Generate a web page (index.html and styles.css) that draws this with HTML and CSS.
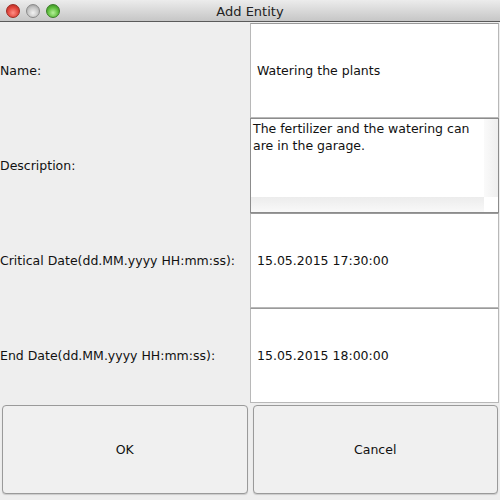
FILE: index.html
```html
<!DOCTYPE html>
<html>
<head>
<meta charset="utf-8">
<link rel="stylesheet" href="styles.css">
</head>
<body>
<div class="window">
  <div class="titlebar">
    <div class="lights">
      <span class="light red"></span>
      <span class="light gray"></span>
      <span class="light green"></span>
    </div>
    <div class="title">Add Entity</div>
  </div>
  <div class="form">
    <div class="label">Name:</div>
    <div class="field">Watering the plants</div>
    <div class="label">Description:</div>
    <div class="area">
      <div class="area-main">
        <div class="area-text">The fertilizer and the watering can are in the garage.</div>
        <div class="vscroll"></div>
      </div>
      <div class="area-bottom">
        <div class="hscroll"></div>
        <div class="corner"></div>
      </div>
    </div>
    <div class="label">Critical Date(dd.MM.yyyy HH:mm:ss):</div>
    <div class="field">15.05.2015 17:30:00</div>
    <div class="label">End Date(dd.MM.yyyy HH:mm:ss):</div>
    <div class="field">15.05.2015 18:00:00</div>
  </div>
  <div class="buttons">
    <div class="btn">OK</div>
    <div class="btn">Cancel</div>
  </div>
</div>
</body>
</html>
```
FILE: styles.css
```css
html, body {
  margin: 0;
  padding: 0;
}
body {
  width: 500px;
  height: 500px;
  background: #eeeeee;
  font-family: "DejaVu Sans", "Liberation Sans", sans-serif;
  font-size: 12.5px;
  color: #111;
  overflow: hidden;
}
.window {
  width: 500px;
  height: 500px;
  display: flex;
  flex-direction: column;
}
.titlebar {
  height: 22px;
  box-sizing: border-box;
  border-bottom: 1px solid #5a5a5a;
  background: linear-gradient(#ececec, #c6c6c6);
  position: relative;
  display: flex;
  align-items: center;
  justify-content: center;
}
.lights {
  position: absolute;
  left: 6px;
  top: 4px;
  display: flex;
  gap: 6px;
}
.light {
  width: 14px;
  height: 14px;
  border-radius: 50%;
  box-sizing: border-box;
}
.red {
  background: radial-gradient(circle at 50% 65%, #ff8f86 0%, #e0443a 55%, #a8261e 100%);
  border: 1px solid #9c2a22;
}
.gray {
  background: radial-gradient(circle at 50% 65%, #f2f2f2 0%, #c4c4c4 55%, #8e8e8e 100%);
  border: 1px solid #8a8a8a;
}
.green {
  background: radial-gradient(circle at 50% 65%, #b6f09a 0%, #5cbc3a 55%, #2f7e1d 100%);
  border: 1px solid #3a7d27;
}
.title {
  font-size: 13px;
  color: #222;
  padding-top: 1px;
}
.form {
  margin-top: 1px;
  display: grid;
  grid-template-columns: 250px 250px;
  grid-template-rows: 95px 95px 95px 95px;
}
.label {
  display: flex;
  align-items: center;
  color: #111;
}
.field {
  background: #fff;
  border: 1px solid #b8b8b8;
  border-top-color: #9a9a9a;
  display: flex;
  align-items: center;
  padding-left: 6px;
  margin-right: 1px;
}
.area {
  border: 1px solid #8c8c8c;
  background: #fff;
  display: flex;
  flex-direction: column;
  margin-right: 1px;
}
.area-main {
  flex: 1;
  display: flex;
}
.area-text {
  flex: 1;
  padding: 1px 2px;
  line-height: 17px;
  padding-right: 6px;
}
.vscroll {
  width: 14px;
  background: linear-gradient(to right, #fafafa, #efefef);
}
.area-bottom {
  height: 15px;
  display: flex;
}
.hscroll {
  flex: 1;
  background: linear-gradient(#ececec, #f9f9f9);
}
.corner {
  width: 14px;
  background: #fff;
}
.buttons {
  margin-top: 2px;
  padding: 0 2px;
  display: flex;
  gap: 5px;
}
.btn {
  flex: 1;
  height: 89px;
  box-sizing: border-box;
  border: 1px solid #9a9a9a;
  border-radius: 4px;
  background: #f0f0f0;
  box-shadow: 0 1px 1px rgba(0,0,0,0.15);
  display: flex;
  align-items: center;
  justify-content: center;
  color: #111;
}
```
